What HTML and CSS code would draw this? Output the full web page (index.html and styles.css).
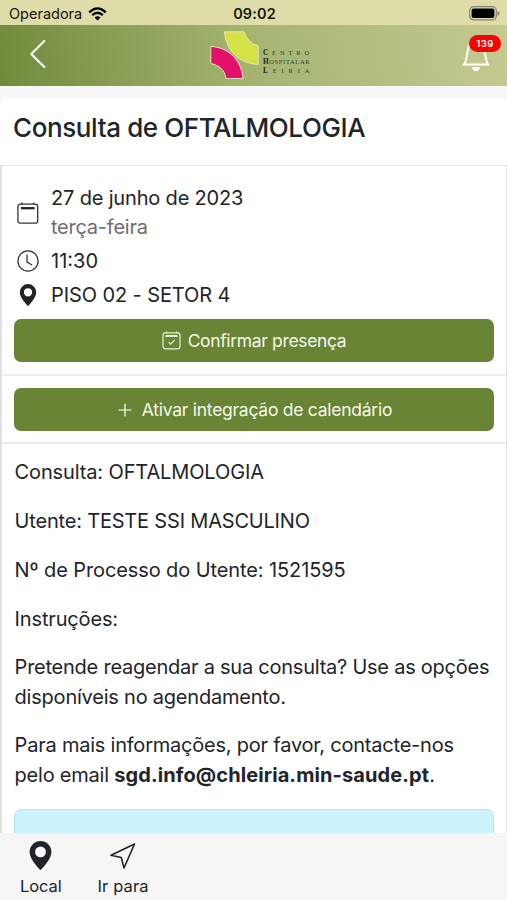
FILE: index.html
```html
<!DOCTYPE html>
<html lang="pt">
<head>
<meta charset="utf-8">
<title>Consulta</title>
<link rel="stylesheet" href="styles.css">
</head>
<body>
<div class="app">
  <div class="status">
    <div class="carrier"><span>Operadora</span>
      <svg width="19" height="14" viewBox="0 0 19 14" fill="none" stroke="#000" stroke-width="2.3"><path d="M1.2 5.3Q9.500-2.600 17.800 5.300M4.200 8.200Q9.500 3.200 14.800 8.200"/><path d="M6.500 10.600Q9.500 7.900 12.500 10.600L9.500 13.600Z" fill="#000" stroke="none"/></svg>
    </div>
    <span class="time">09:02</span>
    <svg class="battery" width="31" height="15" viewBox="0 0 31 15"><rect x=".7" y=".7" width="26.600" height="13.200" rx="4" fill="none" stroke="#85836a" stroke-width="1.200"/><rect x="2.600" y="2.500" width="22.800" height="9.600" rx="2" fill="#000"/><path d="M28.500 5v5q2-.8 2-2.500t-2-2.500" fill="#85836a"/></svg>
  </div>
  <header class="header">
    <svg class="back" width="16" height="28" viewBox="0 0 16 28"><path d="M14.300 1L1.300 14L14.300 27" fill="none" stroke="#fff" stroke-width="2" stroke-linecap="round" stroke-linejoin="round"/></svg>
    <div class="logo">
      <svg width="49" height="49" viewBox="0 0 49 49" stroke="#e6e3bd" stroke-width="1"><path d="M14.500.8H34.200Q37.500 12 48.200 15V33.500C29 32.500 16 20 14.500.8Z" fill="#d5e246"/><path d="M.8 15.500C18 16 31.500 29 33 47.500H16C14.500 38.500 9.500 34.500.8 32.500Z" fill="#e5106b"/></svg>
      <div class="logotext"><span class="l1"><b>C</b>ENTRO</span><span class="l2"><b>H</b>OSPITALAR</span><span class="l3"><b>L</b>EIRIA</span></div>
    </div>
    <div class="bell">
      <svg width="28" height="32" viewBox="0 0 28 32"><path d="M2 24.500H26C22.500 20 23.500 5 19 3Q14 0 9 3C4.500 5 6 20 2 24.500Z" fill="none" stroke="#fff" stroke-width="2"/><path d="M10 27.200h8q-.7 4-4 4t-4-4" fill="#fff"/></svg>
      <span class="badge">139</span>
    </div>
  </header>
  <main class="content">
    <div class="card">
      <h1 class="title"><span>Consulta de OFTALMOLOGIA</span></h1>
      <div class="rows">
        <section class="details">
          <div class="detail date">
            <svg width="22" height="23" viewBox="0 0 22 23" fill="none" stroke="#33363a" stroke-width="1.300"><rect x=".9" y="2.200" width="19.800" height="19" rx="2.500"/><path d="M5 .5v2M16.600.5v2"/><path d="M4 6.200h13.600" stroke="#212529" stroke-width="2.300"/></svg>
            <div><div class="day">27 de junho de 2023</div><div class="weekday">terça-feira</div></div>
          </div>
          <div class="detail hour">
            <svg width="22" height="22" viewBox="0 0 22 22" fill="none" stroke="#33363a" stroke-width="1.300" stroke-linecap="round"><circle cx="11" cy="11" r="10.100"/><path d="M10 5v7l4.700 2.700"/></svg>
            <span>11:30</span>
          </div>
          <div class="detail place">
            <svg width="22" height="22" viewBox="0 0 16 16"><path fill="#212529" d="M8 16s6-5.686 6-10A6 6 0 0 0 2 6c0 4.314 6 10 6 10m0-7a3 3 0 1 1 0-6 3 3 0 0 1 0 6"/></svg>
            <span>PISO 02 - SETOR 4</span>
          </div>
          <button class="btn confirm"><svg width="19" height="19" viewBox="0 0 19 19" fill="none" stroke="#e8f0d8" stroke-width="1.200"><rect x="1" y="1.800" width="17" height="16" rx="2.500"/><path d="M4.500.4v2M14.500.4v2M6.600 11.200l2 2 4-4"/><path d="M3.500 5h12" stroke-width="2"/></svg><span>Confirmar presença</span></button>
        </section>
        <section class="calendar">
          <button class="btn activate"><svg width="14" height="14" viewBox="0 0 14 14" stroke="#fff" stroke-width="1.200" stroke-linecap="round"><path d="M7 1v12M1 7h12"/></svg><span>Ativar integração de calendário</span></button>
        </section>
        <section class="info">
          <p><span class="i1">Consulta: OFTALMOLOGIA</span></p>
          <p><span class="i2">Utente: TESTE SSI MASCULINO</span></p>
          <p><span class="i3">Nº de Processo do Utente: 1521595</span></p>
          <p><span class="i4">Instruções:</span></p>
          <p><span class="i5">Pretende reagendar a sua consulta? Use as opções</span><br><span class="i6">disponíveis no agendamento.</span></p>
          <p><span class="i7">Para mais informações, por favor, contacte-nos</span><br><span class="i8">pelo email <strong>sgd.info@chleiria.min-saude.pt</strong>.</span></p>
          <div class="notice"></div>
        </section>
      </div>
    </div>
  </main>
  <nav class="tabs">
    <div class="tab local"><svg width="29" height="29" viewBox="0 0 16 16"><path fill="#212529" d="M8 16s6-5.686 6-10A6 6 0 0 0 2 6c0 4.314 6 10 6 10m0-7a3 3 0 1 1 0-6 3 3 0 0 1 0 6"/></svg><span>Local</span></div>
    <div class="tab go"><svg width="28" height="29" viewBox="0 0 28 29"><path d="M25.500 3L15 27L12.200 16.500L2 14.300Z" fill="none" stroke="#212529" stroke-width="1.600" stroke-linejoin="round"/></svg><span>Ir para</span></div>
  </nav>
</div>
</body>
</html>
```

FILE: styles.css
```css
* { box-sizing: border-box; }
body { margin: 0; font-family: Inter, "Liberation Sans", sans-serif; color: #212529; }
.app { width: 507px; height: 900px; display: flex; flex-direction: column; overflow: hidden; background: #f7f7f7; }
span, .day, .weekday { white-space: nowrap; }
.status { height: 25px; flex: none; background: #dedca8; display: grid; grid-template-columns: 1fr auto 1fr; align-items: center; padding: 2px 7px 0 9px; color: #171713; }
.carrier { display: flex; align-items: center; gap: 6px; font-size: 14.5px; letter-spacing: 0; }
.time { font-size: 14.5px; font-weight: 600; letter-spacing: .1px; }
.battery { justify-self: end; }
.header { height: 61px; flex: none; display: flex; align-items: center; justify-content: space-between; padding: 0 15px 0 30px; background: linear-gradient(80deg, #708b3c 0%, #8c9f56 25%, #a5b571 50%, #b4bf82 75%, #c6c991 100%); }
.back { margin-bottom: 4px; }
.logo { display: flex; gap: 4px; margin-left: 15px; }
.logotext { display: flex; flex-direction: column; width: 50px; padding-top: 17px; font-family: "Liberation Serif", serif; font-size: 6.4px; line-height: 9px; color: #333c28; }
.logotext span { height: 9.2px; }
.logotext b { font-size: 7.2px; color: #1c2118; }
.l1 { letter-spacing: 3.9px; }
.l2 { letter-spacing: .7px; }
.l3 { letter-spacing: 4.9px; }
.bell { position: relative; width: 30px; height: 32px; margin-right: 0; }
.badge { position: absolute; left: 7px; top: -5px; width: 32px; height: 17px; border-radius: 9px; background: #f50500; color: #fff; font-size: 9.5px; font-weight: 600; line-height: 17px; text-align: center; letter-spacing: .4px; }
.content { flex: 1; min-height: 0; overflow: hidden; padding-top: 12px; }
.card { background: #fff; border-radius: 7px 7px 0 0; }
.title { height: 67px; margin: 0; padding: 10px 13px; font-size: 26px; line-height: 39px; font-weight: 500; letter-spacing: -.39px; }
.rows { border: solid #dfe1e4; border-width: 1px 1px 0 2px; font-size: 20px; line-height: 29.25px; }
.details { height: 210px; padding: 18px 12px 0; border-bottom: 2px solid #eceef0; }
.detail { display: flex; align-items: center; gap: 12px; padding-left: 3px; }
.detail svg { flex: none; }
.day { letter-spacing: -.17px; }
.weekday { color: #6b6d70; letter-spacing: -.24px; }
.hour { margin-top: 4px; }
.place { margin-top: 5px; letter-spacing: -.1px; }
.btn { width: 100%; height: 43px; display: flex; align-items: center; justify-content: center; border: 0; border-radius: 7px; padding: 0; background: #6a8435; color: #f4f8ea; font-family: inherit; font-size: 17.5px; font-weight: 400; }
.confirm { gap: 7px; margin-top: 9px; letter-spacing: -.34px; }
.activate { gap: 10px; letter-spacing: -.26px; padding-left: 2px; }
.calendar { height: 68px; padding: 12px 12px 0; border-bottom: 2px solid #e8ebef; }
.info { padding: 14px 12px 0; }
.info p { margin: 0 0 19.600px; padding-left: .6px; }
.info p:last-of-type { margin-bottom: 18.600px; }
.i1 { letter-spacing: -.13px; }
.i2 { letter-spacing: -.19px; }
.i3 { letter-spacing: -.1px; }
.i4 { letter-spacing: -.15px; }
.i5 { letter-spacing: -.24px; }
.i6, .i7, .i8 { letter-spacing: -.22px; }
.i8 strong { letter-spacing: .1px; font-weight: 700; }
.notice { height: 70px; border: 1px solid #b0e9f2; border-radius: 7px; background: #cdf3fc; }
.tabs { height: 67px; flex: none; display: flex; gap: 36px; padding: 8px 20px 0; background: #f6f6f7; font-size: 16.500px; line-height: 24px; }
.tab { display: flex; flex-direction: column; align-items: center; gap: 4px; }
.local { letter-spacing: -.1px; }
.go { letter-spacing: .1px; }
```
